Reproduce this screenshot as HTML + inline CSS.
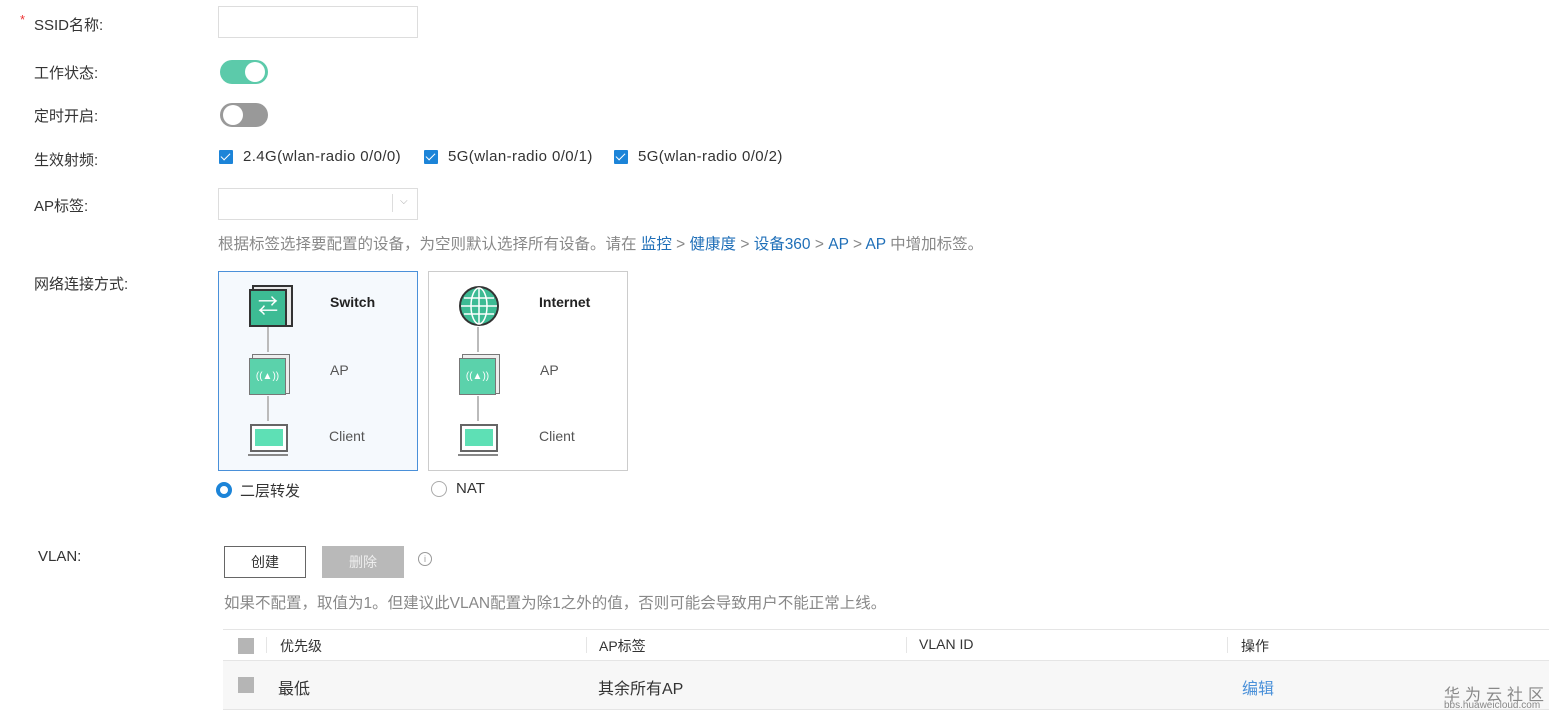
<!DOCTYPE html>
<html><head><meta charset="utf-8"><style>
body{margin:0;width:1566px;height:722px;background:#fff;font-family:"Liberation Sans","Noto Sans CJK SC",sans-serif;color:#333;font-size:15px;position:relative;overflow:hidden}
.a{position:absolute;white-space:nowrap}
.lbl{font-size:15px;color:#333}
.cb{position:absolute;width:14px;height:14px;background:#1c84d8;border-radius:1px}
.cb:after{content:"";position:absolute;left:4px;top:1px;width:4px;height:8px;border:solid #fff;border-width:0 1.5px 1.5px 0;transform:rotate(45deg)}
.card{position:absolute;width:198px;height:198px;border:1px solid #ccc;background:#fff}
.line{position:absolute;width:2px;background:#bbb}
.gray{position:absolute;width:16px;height:16px;background:#b5b5b5}
</style></head><body>
<div class="a" style="left:20px;top:12px;color:#e33;font-size:13px">*</div>
<div class="a lbl" style="left:34px;top:14px">SSID名称:</div>
<div class="a" style="left:218px;top:6px;width:198px;height:30px;border:1px solid #ddd"></div>
<div class="a lbl" style="left:34px;top:62px">工作状态:</div>
<div class="a" style="left:220px;top:60px;width:48px;height:24px;border-radius:12px;background:#5ccaaa"></div>
<div class="a" style="left:245px;top:62px;width:20px;height:20px;border-radius:50%;background:#fff"></div>
<div class="a lbl" style="left:34px;top:105px">定时开启:</div>
<div class="a" style="left:220px;top:103px;width:48px;height:24px;border-radius:12px;background:#999"></div>
<div class="a" style="left:223px;top:105px;width:20px;height:20px;border-radius:50%;background:#fff"></div>
<div class="a lbl" style="left:34px;top:149px">生效射频:</div>
<div class="cb" style="left:219px;top:150px"></div><div class="a" style="left:243px;top:148px;letter-spacing:0.4px">2.4G(wlan-radio 0/0/0)</div>
<div class="cb" style="left:424px;top:150px"></div><div class="a" style="left:448px;top:148px;letter-spacing:0.4px">5G(wlan-radio 0/0/1)</div>
<div class="cb" style="left:614px;top:150px"></div><div class="a" style="left:638px;top:148px;letter-spacing:0.4px">5G(wlan-radio 0/0/2)</div>
<div class="a lbl" style="left:34px;top:195px">AP标签:</div>
<div class="a" style="left:218px;top:188px;width:198px;height:30px;border:1px solid #ddd"></div>
<div class="a" style="left:392px;top:194px;width:1px;height:18px;background:#ddd"></div>
<div class="a" style="left:400px;top:196px;font-size:10px;color:#aaa">⌵</div>
<div class="a" style="left:218px;top:232px;color:#888;font-size:15.5px">根据标签选择要配置的设备，为空则默认选择所有设备。请在 <span style="color:#1f6fb8">监控</span> &gt; <span style="color:#1f6fb8">健康度</span> &gt; <span style="color:#1f6fb8">设备360</span> &gt; <span style="color:#1f6fb8">AP</span> &gt; <span style="color:#1f6fb8">AP</span> 中增加标签。</div>
<div class="a lbl" style="left:34px;top:273px">网络连接方式:</div>

<div class="card" style="left:218px;top:271px;border-color:#4a90d9;background:#f5f9fd"></div>
<div class="card" style="left:428px;top:271px"></div>

<div class="a" style="left:252px;top:285px;width:37px;height:38px;background:#e8e8e8;border:2px solid #333"></div>
<div class="a" style="left:249px;top:289px;width:34px;height:34px;background:#3dbb94;border:2px solid #333;color:#fff;font-size:20px;line-height:32px;text-align:center">⇄</div>
<div class="line" style="left:267px;top:327px;height:25px"></div>
<div class="a" style="left:252px;top:354px;width:36px;height:38px;background:#eee;border:1px solid #777"></div>
<div class="a" style="left:249px;top:358px;width:35px;height:35px;background:#5bd2ab;border:1px solid #777;color:#fff;font-size:10px;line-height:35px;text-align:center">((▲))</div>
<div class="line" style="left:267px;top:396px;height:25px"></div>
<div class="a" style="left:250px;top:424px;width:34px;height:24px;border:2px solid #666;background:#fff"></div>
<div class="a" style="left:255px;top:429px;width:28px;height:17px;background:#5ee0b5"></div>
<div class="a" style="left:248px;top:454px;width:40px;height:2px;background:#888"></div>
<div class="a" style="left:330px;top:294px;font-weight:bold;font-size:14px;color:#222">Switch</div>
<div class="a" style="left:330px;top:362px;color:#555;font-size:14px">AP</div>
<div class="a" style="left:329px;top:428px;color:#555;font-size:14px">Client</div>

<svg class="a" style="left:458px;top:285px" width="42" height="42" viewBox="0 0 42 42"><circle cx="21" cy="21" r="19" fill="#3dbb94" stroke="#333" stroke-width="2"/><g stroke="#fff" stroke-width="1.5" fill="none"><ellipse cx="21" cy="21" rx="8" ry="18"/><line x1="21" y1="3" x2="21" y2="39"/><line x1="3" y1="21" x2="39" y2="21"/><line x1="6" y1="13" x2="36" y2="13"/><line x1="6" y1="29" x2="36" y2="29"/></g></svg>
<div class="line" style="left:477px;top:327px;height:25px"></div>
<div class="a" style="left:462px;top:354px;width:36px;height:38px;background:#eee;border:1px solid #777"></div>
<div class="a" style="left:459px;top:358px;width:35px;height:35px;background:#5bd2ab;border:1px solid #777;color:#fff;font-size:10px;line-height:35px;text-align:center">((▲))</div>
<div class="line" style="left:477px;top:396px;height:25px"></div>
<div class="a" style="left:460px;top:424px;width:34px;height:24px;border:2px solid #666;background:#fff"></div>
<div class="a" style="left:465px;top:429px;width:28px;height:17px;background:#5ee0b5"></div>
<div class="a" style="left:458px;top:454px;width:40px;height:2px;background:#888"></div>
<div class="a" style="left:539px;top:294px;font-weight:bold;font-size:14px;color:#222">Internet</div>
<div class="a" style="left:540px;top:362px;color:#555;font-size:14px">AP</div>
<div class="a" style="left:539px;top:428px;color:#555;font-size:14px">Client</div>

<div class="a" style="left:216px;top:482px;width:8px;height:8px;border-radius:50%;border:4px solid #1c84d8;background:#fff"></div>
<div class="a" style="left:240px;top:480px;font-size:15px">二层转发</div>
<div class="a" style="left:431px;top:481px;width:14px;height:14px;border-radius:50%;border:1px solid #aaa"></div>
<div class="a" style="left:456px;top:480px;font-size:15px">NAT</div>

<div class="a lbl" style="left:38px;top:548px;font-size:15px">VLAN:</div>
<div class="a" style="left:224px;top:546px;width:80px;height:30px;border:1px solid #666;text-align:center;line-height:30px;font-size:14px">创建</div>
<div class="a" style="left:322px;top:546px;width:82px;height:32px;background:#b9b9b9;color:#eee;text-align:center;line-height:32px;font-size:14px">删除</div>
<div class="a" style="left:418px;top:552px;width:12px;height:12px;border-radius:50%;border:1px solid #999;font-size:9px;text-align:center;line-height:12px;color:#999">i</div>
<div class="a" style="left:224px;top:591px;color:#888;font-size:15.5px">如果不配置，取值为1。但建议此VLAN配置为除1之外的值，否则可能会导致用户不能正常上线。</div>

<div class="a" style="left:223px;top:629px;width:1326px;height:1px;background:#e5e5e5"></div>
<div class="a" style="left:223px;top:660px;width:1326px;height:48px;background:#f7f7f7;border-top:1px solid #e5e5e5;border-bottom:1px solid #e5e5e5"></div>
<div class="gray" style="left:238px;top:638px"></div>
<div class="a" style="left:266px;top:637px;width:1px;height:16px;background:#e5e5e5"></div>
<div class="a" style="left:280px;top:636px;font-size:14px">优先级</div>
<div class="a" style="left:586px;top:637px;width:1px;height:16px;background:#e5e5e5"></div>
<div class="a" style="left:599px;top:636px;font-size:14px">AP标签</div>
<div class="a" style="left:906px;top:637px;width:1px;height:16px;background:#e5e5e5"></div>
<div class="a" style="left:919px;top:636px;font-size:14px">VLAN ID</div>
<div class="a" style="left:1227px;top:637px;width:1px;height:16px;background:#e5e5e5"></div>
<div class="a" style="left:1241px;top:636px;font-size:14px">操作</div>
<div class="gray" style="left:238px;top:677px"></div>
<div class="a" style="left:278px;top:675px;font-size:16px">最低</div>
<div class="a" style="left:598px;top:675px;font-size:16px">其余所有AP</div>
<div class="a" style="left:1242px;top:675px;font-size:16px;color:#4a90d9">编辑</div>
<div class="a" style="left:1444px;top:681px;font-size:16px;color:#888;letter-spacing:5px">华为云社区</div>
<div class="a" style="left:1444px;top:700px;font-size:10px;color:#888">bbs.huaweicloud.com</div>
</body></html>
